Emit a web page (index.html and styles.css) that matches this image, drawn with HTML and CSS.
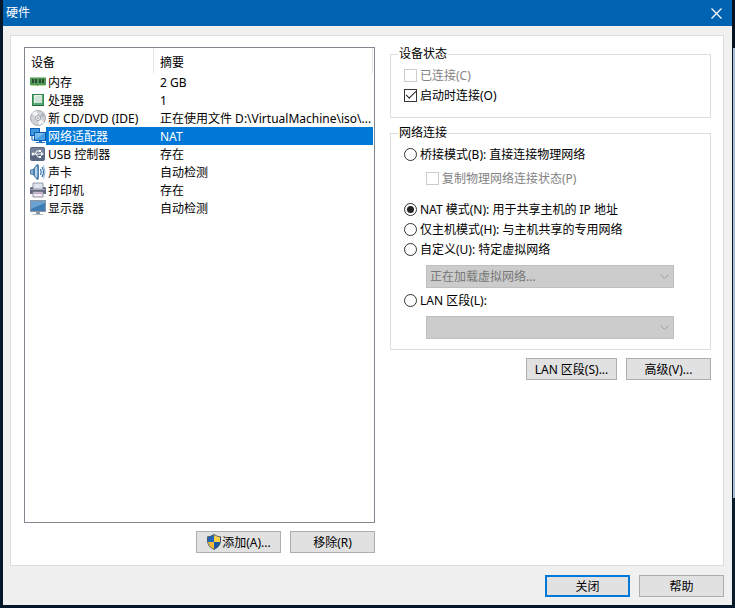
FILE: index.html
```html
<!DOCTYPE html>
<html lang="zh-CN">
<head>
<meta charset="utf-8">
<title>硬件</title>
<link rel="stylesheet" href="styles.css">
</head>
<body>
<main class="window">
  <header class="titlebar">
    <h1 class="title">硬件</h1>
    <button class="close" type="button" aria-label="关闭">
      <svg width="11" height="11" viewBox="0 0 11 11"><path d="M.5.5l10 10M10.5.5l-10 10" stroke="#fff" stroke-width="1.2" fill="none"/></svg>
    </button>
  </header>

  <div class="content">
    <section class="panel">
      <div class="column">
        <div class="list">
          <table class="devices">
            <thead>
              <tr><th class="name">设备</th><th>摘要</th></tr>
            </thead>
            <tbody>
              <tr>
                <td><div class="device">
                  <svg width="16" height="16" viewBox="0 0 16 16"><path d="M0 3h16v8h-1v1H1v-1H0z" fill="#4f9a56"/><path d="M0 3h16v1H0z" fill="#9ccb9c"/><path d="M2 5h2v4H2zM5 5h2v4H5zM9 5h2v4H9zM12 5h2v4h-2z" fill="#2c4d33"/><path d="M1 11h6v1H1zM8 11h7v1H8z" fill="#b9d58a"/></svg>
                  <span>内存</span></div></td>
                <td>2 GB</td>
              </tr>
              <tr>
                <td><div class="device">
                  <svg width="16" height="16" viewBox="0 0 16 16"><path d="M2 2h12v12H2z" fill="#2f8a51"/><path d="M3 3h10v10H3z" fill="#58a873"/><path d="M4 3h8v8H4z" fill="#e9f3ec"/><path d="M5 4h7v7H5z" fill="#cfe3d6"/><path d="M2 13h12v1H2z" fill="#1d6b3b"/></svg>
                  <span>处理器</span></div></td>
                <td>1</td>
              </tr>
              <tr>
                <td><div class="device">
                  <svg width="16" height="16" viewBox="0 0 16 16"><circle cx="8" cy="8" r="7.5" fill="#cfd2d6" stroke="#a6a9ae"/><path d="M8 8L2 3.5A7.500 7.500 0 0 1 7 1zM8 8l6.200 4A7.500 7.500 0 0 1 9 15z" fill="#f4f5f7"/><path d="M8 8l5-5.500a7.500 7.500 0 0 1 2 4z" fill="#b4b8c0"/><circle cx="8" cy="8" r="2.500" fill="#f8f8f8" stroke="#9ba0a8"/><circle cx="8" cy="8" r="1" fill="#aaa"/></svg>
                  <span>新 CD/DVD (IDE)</span></div></td>
                <td>正在使用文件 D:\VirtualMachine\iso\...</td>
              </tr>
              <tr class="selected">
                <td><div class="device">
                  <svg width="16" height="16" viewBox="0 0 16 16"><path d="M0 0h10v8H0z" fill="#0d62b5"/><path d="M1 1h8v6H1z" fill="#3f98df"/><path d="M2 8v4h3" stroke="#0d62b5" fill="none"/><path d="M4 4h12v9H4z" fill="#0b5cad"/><path d="M5 5h10v7H5z" fill="#4a9fe2"/><path d="M5 5h10L5 11z" fill="#7abcf0"/><path d="M9 13h3v1h3v1H6v-1h3z" fill="#1b74c6"/></svg>
                  <span>网络适配器</span></div></td>
                <td>NAT</td>
              </tr>
              <tr>
                <td><div class="device">
                  <svg width="16" height="16" viewBox="0 0 16 16"><rect x="0" y="1" width="15" height="14" rx="2" fill="#5a6780"/><path d="M1 3q0-1 1-1h11q1 0 1 1v4H1z" fill="#77839a"/><path d="M2 8h10M5 8l2-3h2M6 8l2 3h2" stroke="#fff" fill="none"/><path d="M11 6l3 2-3 2zM9 4h2v2H9zM9 10h2v2H9z" fill="#fff"/><circle cx="3" cy="8" r="1.500" fill="#fff"/></svg>
                  <span>USB 控制器</span></div></td>
                <td>存在</td>
              </tr>
              <tr>
                <td><div class="device">
                  <svg width="16" height="16" viewBox="0 0 16 16"><path d="M0 6q1-1 3-1l4-5q2 0 2 2v12q0 2-2 2l-4-5Q1 11 0 10z" fill="#4e7fae"/><path d="M5 4l2-2q1 6 0 12l-2-2z" fill="#b9d5ea"/><path d="M1 6h2v4H1z" fill="#86b1d5"/><path d="M10.500 5q1.500 3 0 6M12 3q3 5 0 10" stroke="#2f6fa8" fill="none" stroke-width="1.200"/><path d="M13.500 1.500q3 6.500 0 13" stroke="#8fb4d2" fill="none"/></svg>
                  <span>声卡</span></div></td>
                <td>自动检测</td>
              </tr>
              <tr>
                <td><div class="device">
                  <svg width="16" height="16" viewBox="0 0 16 16"><path d="M3 1h10v6H3z" fill="#dfe5ee" stroke="#9199a8"/><path d="M1 5h2v2h10V5h2l1 1v6H0V6z" fill="#666a80"/><path d="M1 7h14v1H1z" fill="#a3a7b8"/><path d="M3 10h10v5H3z" fill="#f6ecf6" stroke="#8b8b9e"/><path d="M4 11h8v1H4z" fill="#c7a3cc"/></svg>
                  <span>打印机</span></div></td>
                <td>存在</td>
              </tr>
              <tr>
                <td><div class="device">
                  <svg width="16" height="16" viewBox="0 0 16 16"><path d="M0 0h16v12H0z" fill="#8b95a1"/><path d="M1 1h14v10H1z" fill="#3f7db5"/><path d="M1 1h14v2L1 9z" fill="#6ba2cf"/><path d="M6 12h4v2H6z" fill="#8c97a4"/><path d="M3 14h10v1H3z" fill="#b3bcc7"/></svg>
                  <span>显示器</span></div></td>
                <td>自动检测</td>
              </tr>
            </tbody>
          </table>
        </div>
        <div class="actions">
          <button class="button" type="button">
            <svg width="16" height="16" viewBox="0 0 16 16"><path d="M8 0Q11 2 15 2.500V7Q14.500 13 8 16 1.500 13 1 7V2.500Q5 2 8 0z" fill="#4b5a66"/><path d="M8 1Q5 3 2 3.200V8h6z" fill="#1f66b8"/><path d="M8 1q3 2 6 2.200V8H8z" fill="#fbd04a"/><path d="M2 8h6v7Q2.500 12.500 2 8z" fill="#f0b93a"/><path d="M14 8H8v7Q13.500 12.500 14 8z" fill="#1a57a3"/></svg>
            <span>添加(A)...</span>
          </button>
          <button class="button" type="button"><span>移除(R)</span></button>
        </div>
      </div>

      <form class="column settings">
        <fieldset class="group status">
          <legend>设备状态</legend>
          <label class="option"><input type="checkbox" disabled><span>已连接(C)</span></label>
          <label class="option"><input type="checkbox" checked><span>启动时连接(O)</span></label>
        </fieldset>
        <fieldset class="group network">
          <legend>网络连接</legend>
          <label class="option"><input type="radio" name="net"><span>桥接模式(B): 直接连接物理网络</span></label>
          <label class="option nested"><input type="checkbox" disabled><span>复制物理网络连接状态(P)</span></label>
          <label class="option"><input type="radio" name="net" checked><span>NAT 模式(N): 用于共享主机的 IP 地址</span></label>
          <label class="option"><input type="radio" name="net"><span>仅主机模式(H): 与主机共享的专用网络</span></label>
          <label class="option"><input type="radio" name="net"><span>自定义(U): 特定虚拟网络</span></label>
          <div class="combo">
            <select disabled aria-label="特定虚拟网络"><option>正在加载虚拟网络...</option></select>
            <svg width="9" height="6" viewBox="0 0 9 6"><path d="M.5.5l4 4 4-4" fill="none" stroke="#a0a0a0"/></svg>
          </div>
          <label class="option"><input type="radio" name="net"><span>LAN 区段(L):</span></label>
          <div class="combo">
            <select disabled aria-label="LAN 区段"><option></option></select>
            <svg width="9" height="6" viewBox="0 0 9 6"><path d="M.5.5l4 4 4-4" fill="none" stroke="#a0a0a0"/></svg>
          </div>
        </fieldset>
        <div class="actions">
          <button class="button wide" type="button"><span>LAN 区段(S)...</span></button>
          <button class="button" type="button"><span>高级(V)...</span></button>
        </div>
      </form>
    </section>

    <footer class="actions">
      <button class="button primary" type="button"><span>关闭</span></button>
      <button class="button" type="button"><span>帮助</span></button>
    </footer>
  </div>
</main>
</body>
</html>
```
FILE: styles.css
```css
* {
  box-sizing: border-box;
}

body {
  margin: 0;
  min-height: 100vh;
  display: flex;
  padding: 0 3px 3px;
  background: linear-gradient(#04101c 48px, #a9bfd0 48px, #a9bfd0 498px, #0a1c2c 498px) right / 2px 100% no-repeat, #04182b;
  color: #000;
  font: 12px/18px "Noto Sans", "Noto Sans CJK SC", sans-serif;
}

button,
input,
select {
  font: inherit;
  color: inherit;
  margin: 0;
}

svg {
  display: block;
  flex: none;
}

.window {
  flex: 1;
  min-width: 0;
  display: flex;
  flex-direction: column;
  background: #f0f0f0;
}

.titlebar {
  height: 26px;
  padding: 0 10px 0 3px;
  display: flex;
  align-items: center;
  justify-content: space-between;
  background: #0063b1;
  color: #fff;
}

.title {
  margin: 0;
  font-size: 12px;
  font-weight: 400;
}

.close {
  padding: 0;
  border: 0;
  background: none;
}

.content {
  flex: 1;
  display: flex;
  flex-direction: column;
  gap: 9px;
  padding: 9px 8px 8px 7px;
}

.panel {
  flex: 1;
  display: grid;
  grid-template-columns: 351fr 321fr;
  gap: 15px;
  padding: 11px 12px 12px 13px;
  border: 1px solid #dcdcdc;
  background: #fff;
}

.column {
  min-width: 0;
  display: flex;
  flex-direction: column;
  gap: 8px;
}

.list {
  flex: 1;
  padding-right: 1px;
  border: 1px solid #828790;
}

.devices {
  width: 100%;
  table-layout: fixed;
  border-spacing: 0;
}

.devices th {
  height: 25px;
  padding: 4px 6px 0;
  border-right: 1px solid #e5e5e5;
  font-weight: 400;
  text-align: left;
}

.devices .name {
  width: 129px;
}

.devices td {
  height: 18px;
  padding: 0;
  line-height: 16px;
  white-space: nowrap;
}

.devices td + td {
  padding: 2px 0 0 6px;
}

.device {
  display: flex;
  align-items: center;
  padding-left: 5px;
}

.device span {
  flex: 1;
  padding: 2px 0 0 2px;
}

.selected {
  color: #fff;
}

.selected .device span,
.selected td + td {
  background: #0078d7;
}

.actions {
  display: flex;
  justify-content: flex-end;
  gap: 9px;
}

.button {
  min-width: 85px;
  height: 22px;
  padding: 0 5px;
  display: flex;
  align-items: center;
  justify-content: center;
  border: 1px solid #adadad;
  background: #e1e1e1;
  white-space: nowrap;
}

.button span,
.option span {
  padding-top: 2px;
}

.wide {
  min-width: 91px;
}

.primary {
  border: 2px solid #0078d7;
}

.settings {
  gap: 8px;
}

.group {
  min-width: 0;
  margin: 0;
  padding: 4px 12px 12px 13px;
  border: 1px solid #dcdcdc;
}

.network {
  padding-bottom: 10px;
}

.group legend {
  margin-left: -6px;
  padding: 0 1px;
  line-height: 14px;
}

.option {
  display: flex;
  align-items: center;
  gap: 3px;
  height: 20px;
  white-space: nowrap;
}

.option input {
  appearance: none;
  flex: none;
  width: 13px;
  height: 13px;
  display: grid;
  place-items: center;
  border: 1px solid #333;
  background: #fff;
}

.option input[type="radio"] {
  border-radius: 50%;
}

.option input[type="radio"]:checked::before {
  content: "";
  width: 7px;
  height: 7px;
  border-radius: 50%;
  background: #222;
}

.option input[type="checkbox"]:checked::before {
  content: "";
  width: 9px;
  height: 4px;
  margin-bottom: 3px;
  border: solid #222;
  border-width: 0 0 1px 1px;
  transform: rotate(-45deg);
}

.option input:disabled {
  border-color: #ccc;
}

.option input:disabled + span {
  color: #838383;
}

.nested {
  margin: 4px 0 11px 22px;
}

.combo {
  position: relative;
  margin: 6px 24px 2px 22px;
}

.combo:last-child {
  margin-bottom: 0;
}

.combo select {
  appearance: none;
  display: block;
  width: 100%;
  height: 23px;
  padding: 1px 20px 0 3px;
  border: 1px solid #bfbfbf;
  border-radius: 0;
  background: #ccc;
  color: #777;
  opacity: 1;
}

.combo svg {
  position: absolute;
  top: 9px;
  right: 5px;
}
```
